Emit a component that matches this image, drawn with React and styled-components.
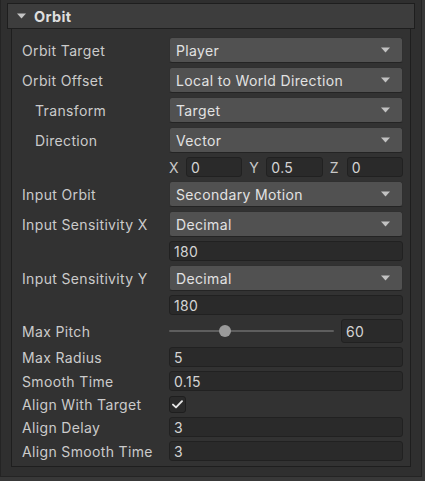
import React from "react";
import styled, { createGlobalStyle } from "styled-components";

const Global = createGlobalStyle`
  html, body { margin: 0; padding: 0; background: #383838; }
  body { font-family: Inter, "Noto Sans", sans-serif; font-size: 14px; letter-spacing: 0.35px; }
  * { box-sizing: border-box; }
`;

const Frame = styled.div`
  width: 422px;
  background: #2f2f2f;
  border-left: 1px solid #242424;
  border-right: 1px solid #242424;
  border-bottom: 1px solid #242424;
  padding: 3px 6px 9px 6px;
`;

const Header = styled.div`
  height: 26px;
  display: flex;
  align-items: center;
  gap: 8px;
  padding-left: 9px;
  background: #3d3d3d;
  border: 1px solid #1e1e1e;
  color: #dedede;
  font-weight: 700;
  font-size: 14.5px;
`;

const Caret = styled.svg`
  width: 9px;
  height: 6px;
  flex: none;
`;

const Panel = styled.div`
  margin: 0 4px;
  background: #323232;
  border: 1px solid #1e1e1e;
  border-top: none;
  padding: 8px 7px 5px 10px;
  display: flex;
  flex-direction: column;
  gap: 4px;
`;

const Row = styled.div`
  display: flex;
  align-items: center;
  min-height: ${(p) => p.$h || 20}px;
`;

const Label = styled.div`
  width: 147px;
  flex: none;
  color: #cbcbcb;
  padding-left: ${(p) => (p.$indent ? 13 : 0)}px;
  white-space: nowrap;
`;

const Control = styled.div`
  flex: 1;
  min-width: 0;
  display: flex;
  align-items: center;
  gap: 7px;
`;

const Dropdown = styled.div`
  flex: 1;
  height: 26px;
  display: flex;
  align-items: center;
  justify-content: space-between;
  padding: 0 12px 0 6px;
  background: #515151;
  border: 1px solid #303030;
  border-bottom-color: #242424;
  border-radius: 3px;
  color: #e2e2e2;
`;

const Field = styled.div`
  flex: 1;
  min-width: 0;
  height: ${(p) => p.$h || 20}px;
  display: flex;
  align-items: center;
  padding: 0 4px;
  background: #2a2a2a;
  border: 1px solid #212121;
  border-radius: 3px;
  color: #d4d4d4;
`;

const Axis = styled.div`
  flex: 1;
  display: flex;
  align-items: center;
  gap: 6px;
`;

const AxisLabel = styled.span`
  color: #c8c8c8;
  width: 11px;
  flex: none;
`;

const Slider = styled.div`
  position: relative;
  flex: 1;
  height: 24px;
  display: flex;
  align-items: center;
`;

const Track = styled.div`
  flex: 1;
  height: 2px;
  background: #5e5e5e;
  border-radius: 1px;
`;

const Thumb = styled.div`
  position: absolute;
  top: 6px;
  width: 12px;
  height: 12px;
  border-radius: 50%;
  background: #9a9a9a;
`;

const SliderValue = styled(Field)`
  flex: none;
  width: 62px;
`;

const Checkbox = styled.div`
  width: 17px;
  height: 17px;
  background: #2a2a2a;
  border: 1px solid #1e1e1e;
  border-radius: 3px;
  display: flex;
  align-items: center;
  justify-content: center;
`;

const Arrow = () => (
  <Caret viewBox="0 0 9 6">
    <path d="M0 0.5 L9 0.5 L4.5 5.5 Z" fill="#c4c4c4" />
  </Caret>
);

const Select = ({ value }) => (
  <Dropdown>
    <span>{value}</span>
    <Caret viewBox="0 0 9 6">
      <path d="M0 0.5 L9 0.5 L4.5 5.5 Z" fill="#c2c2c2" />
    </Caret>
  </Dropdown>
);

export default function App() {
  return (
    <>
      <Global />
      <Frame>
        <Header>
          <Arrow />
          <span>Orbit</span>
        </Header>
        <Panel>
          <Row $h={26}>
            <Label>Orbit Target</Label>
            <Control><Select value="Player" /></Control>
          </Row>
          <Row $h={26}>
            <Label>Orbit Offset</Label>
            <Control><Select value="Local to World Direction" /></Control>
          </Row>
          <Row $h={26}>
            <Label $indent>Transform</Label>
            <Control><Select value="Target" /></Control>
          </Row>
          <Row $h={26}>
            <Label $indent>Direction</Label>
            <Control><Select value="Vector" /></Control>
          </Row>
          <Row>
            <Label />
            <Control>
              <Axis><AxisLabel>X</AxisLabel><Field>0</Field></Axis>
              <Axis><AxisLabel>Y</AxisLabel><Field>0.5</Field></Axis>
              <Axis><AxisLabel>Z</AxisLabel><Field>0</Field></Axis>
            </Control>
          </Row>
          <Row $h={26}>
            <Label>Input Orbit</Label>
            <Control><Select value="Secondary Motion" /></Control>
          </Row>
          <Row $h={26}>
            <Label>Input Sensitivity X</Label>
            <Control><Select value="Decimal" /></Control>
          </Row>
          <Row>
            <Label />
            <Control><Field>180</Field></Control>
          </Row>
          <Row $h={26}>
            <Label>Input Sensitivity Y</Label>
            <Control><Select value="Decimal" /></Control>
          </Row>
          <Row>
            <Label />
            <Control><Field>180</Field></Control>
          </Row>
          <Row $h={24}>
            <Label>Max Pitch</Label>
            <Control>
              <Slider>
                <Track />
                <Thumb style={{ left: `${(50 / 165) * 100}%` }} />
              </Slider>
              <SliderValue $h={24}>60</SliderValue>
            </Control>
          </Row>
          <Row>
            <Label>Max Radius</Label>
            <Control><Field>5</Field></Control>
          </Row>
          <Row>
            <Label>Smooth Time</Label>
            <Control><Field>0.15</Field></Control>
          </Row>
          <Row $h={18}>
            <Label>Align With Target</Label>
            <Control>
              <Checkbox>
                <svg width="11" height="9" viewBox="0 0 11 9">
                  <path d="M1 4.6 L4 7.4 L10 1.2" fill="none" stroke="#e8e8e8" strokeWidth="1.9" strokeLinecap="round" strokeLinejoin="round" />
                </svg>
              </Checkbox>
            </Control>
          </Row>
          <Row>
            <Label>Align Delay</Label>
            <Control><Field>3</Field></Control>
          </Row>
          <Row>
            <Label>Align Smooth Time</Label>
            <Control><Field>3</Field></Control>
          </Row>
        </Panel>
      </Frame>
    </>
  );
}
